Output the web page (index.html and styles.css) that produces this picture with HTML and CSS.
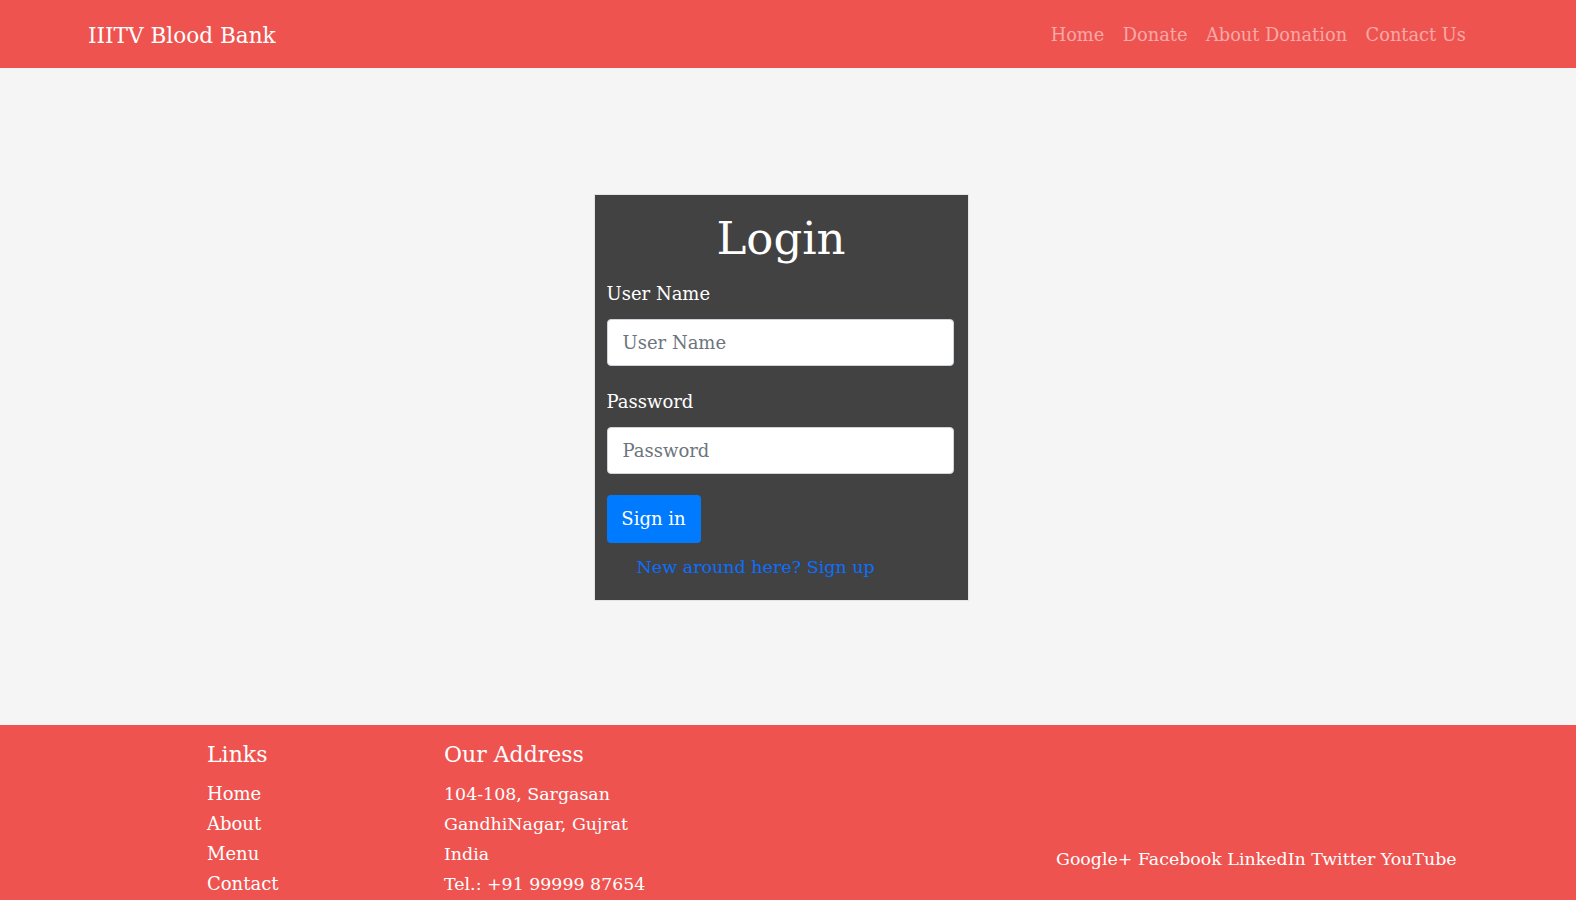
FILE: index.html
```html
<!DOCTYPE html>
<html lang="en">
<head>
<meta charset="utf-8">
<title>IIITV Blood Bank - Login</title>
<link rel="stylesheet" href="styles.css">
</head>
<body>
<nav class="navbar">
  <a class="brand" href="#">IIITV Blood Bank</a>
  <ul class="nav-links">
    <li><a href="#">Home</a></li>
    <li><a href="#">Donate</a></li>
    <li><a href="#">About Donation</a></li>
    <li><a href="#">Contact Us</a></li>
  </ul>
</nav>
<main class="main">
  <form class="card">
    <h1 class="card-title">Login</h1>
    <label class="label" for="user">User Name</label>
    <input class="input" id="user" type="text" placeholder="User Name">
    <label class="label label-pw" for="pw">Password</label>
    <input class="input" id="pw" type="password" placeholder="Password">
    <button class="btn" type="button">Sign in</button>
    <a class="signup" href="#">New around here? Sign up</a>
  </form>
</main>
<footer class="footer">
  <div class="col col-links">
    <h4 class="foot-title">Links</h4>
    <ul class="foot-list">
      <li><a href="#">Home</a></li>
      <li><a href="#">About</a></li>
      <li><a href="#">Menu</a></li>
      <li><a href="#">Contact</a></li>
    </ul>
  </div>
  <div class="col col-address">
    <h4 class="foot-title">Our Address</h4>
    <address class="foot-list foot-address">
      <div>104-108, Sargasan</div>
      <div>GandhiNagar, Gujrat</div>
      <div>India</div>
      <div>Tel.: +91 99999 87654</div>
    </address>
  </div>
  <div class="col col-social">
    <span>Google+</span> <span>Facebook</span> <span>LinkedIn</span> <span>Twitter</span> <span>YouTube</span>
  </div>
</footer>
</body>
</html>
```

FILE: styles.css
```css
* { box-sizing: border-box; }
html, body { margin: 0; padding: 0; }
body {
  background: #f5f5f5;
  font-family: "DejaVu Serif", "Liberation Serif", serif;
  color: #212529;
}
a { text-decoration: none; }

.navbar {
  height: 68px;
  background: #ef5350;
  display: flex;
  align-items: center;
  justify-content: space-between;
  padding: 0 110px 0 88px;
}
.brand {
  color: #fff;
  font-size: 21.6px;
  line-height: 30px;
  margin-top: 4px;
}
.nav-links {
  list-style: none;
  margin: 2px 0 0 0;
  padding: 0;
  display: flex;
  gap: 18.5px;
}
.nav-links a {
  color: rgba(255, 255, 255, 0.5);
  font-size: 17.8px;
  line-height: 26px;
}

.main {
  height: 657px;
  display: flex;
  align-items: center;
  justify-content: center;
  padding-right: 14px;
  padding-top: 1px;
}
.card {
  width: 375px;
  height: 407px;
  background: #424242;
  border: 1px solid #e4e4e4;
  padding: 13px 12px 0 12px;
  display: flex;
  flex-direction: column;
  align-items: flex-start;
}
.card-title {
  align-self: stretch;
  text-align: center;
  margin: 0;
  font-weight: normal;
  font-size: 45px;
  line-height: 62px;
  color: #fff;
}
.label {
  color: #fff;
  font-size: 18px;
  line-height: 24px;
  margin-top: 12px;
  margin-bottom: 13px;
}
.label-pw { margin-top: 24px; }
.input {
  width: 347px;
  height: 47px;
  border: 1px solid #ced4da;
  border-radius: 4px;
  background: #fff;
  padding: 0 15px;
  font-family: inherit;
  font-size: 18px;
  color: #495057;
  outline: none;
}
.input::placeholder { color: #6c757d; opacity: 1; }
.btn {
  margin-top: 21px;
  height: 48px;
  width: 94px;
  border: none;
  border-radius: 4px;
  background: #007bff;
  color: #fff;
  font-family: inherit;
  font-size: 18px;
  padding: 0;
}
.signup {
  margin-top: 12px;
  margin-left: 30px;
  color: #0d6efd;
  font-size: 17.5px;
  line-height: 24px;
}

.footer {
  background: #ef5350;
  color: #fff;
  display: flex;
  padding: 15px 0 20px 207px;
}
.col-links { width: 237px; }
.col-address { width: 420px; }
.foot-title {
  margin: 0 0 9px 0;
  font-weight: normal;
  font-size: 22px;
  line-height: 30px;
}
.foot-list {
  list-style: none;
  margin: 0;
  padding: 0;
  font-style: normal;
  font-size: 18px;
  line-height: 30px;
}
.foot-address { font-size: 17.4px; }
.foot-list a { color: #fff; }
.col-social {
  padding-top: 104px;
  margin-left: 192px;
  font-size: 17.4px;
  line-height: 30px;
  white-space: nowrap;
}
```
